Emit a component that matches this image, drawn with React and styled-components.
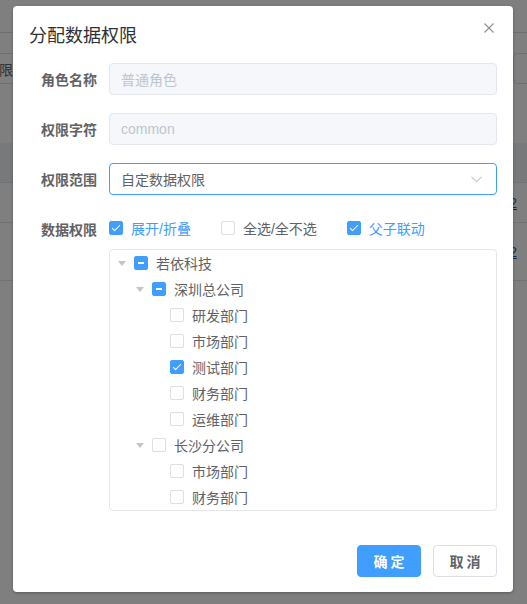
import React from "react";
import styled, { createGlobalStyle } from "styled-components";

const GlobalStyle = createGlobalStyle`
  html, body { margin: 0; padding: 0; }
  body {
    font-family: "Liberation Sans", "Noto Sans CJK SC", sans-serif;
    font-size: 14px;
    background: #fff;
  }
  * { box-sizing: border-box; }
`;

/* ---------- background page ---------- */
const Page = styled.div`
  position: relative;
  width: 527px;
  height: 604px;
  overflow: hidden;
  background: #fff;
  display: flex;
  flex-direction: column;
`;

const Navbar = styled.div`
  height: 33px;
  border-bottom: 1px solid #d8dce5;
  flex-shrink: 0;
`;

const Toolbar = styled.div`
  margin-top: 20px;
  height: 31px;
  display: flex;
  justify-content: space-between;
  flex-shrink: 0;
`;

const CutTab = styled.div`
  width: 14px;
  height: 31px;
  border-top: 1px solid #dcdfe6;
  border-bottom: 1px solid #dcdfe6;
  overflow: hidden;
  display: flex;
  justify-content: flex-end;
  align-items: center;
  white-space: nowrap;
  color: #606266;
  font-size: 14px;
  font-family: "Noto Sans CJK SC", sans-serif;
`;

const CutText = styled.span`
  flex-shrink: 0;
  padding-right: 1px;
`;

const RightBox = styled.div`
  width: 30px;
  height: 31px;
  border: 1px solid #dcdfe6;
  border-radius: 4px;
  margin-right: -16px;
`;

const Table = styled.div`
  margin-top: 59px;
  display: flex;
  flex-direction: column;
`;

const TableHead = styled.div`
  height: 40px;
  background: #f0f2f5;
  border-bottom: 1px solid #dfe6ec;
`;

const TableRow = styled.div`
  height: ${(p) => p.$h}px;
  border-bottom: 1px solid #dfe6ec;
  display: flex;
  align-items: center;
  justify-content: flex-end;
  padding-right: 10px;
`;

const CellLink = styled.span`
  color: #1f5fa8;
  text-decoration: underline;
  font-size: 14px;
`;

/* ---------- overlay & dialog ---------- */
const Overlay = styled.div`
  position: absolute;
  inset: 0;
  background: rgba(0, 0, 0, 0.5);
`;

const Dialog = styled.div`
  position: absolute;
  left: 13px;
  top: 6px;
  width: 500px;
  height: 586px;
  background: #fff;
  border-radius: 4px;
  box-shadow: 0 1px 3px rgba(0, 0, 0, 0.3);
  display: flex;
  flex-direction: column;
`;

const Header = styled.div`
  position: relative;
  padding: 16px 16px 0;
`;

const Title = styled.div`
  font-family: "Noto Sans CJK SC", sans-serif;
  font-size: 18px;
  line-height: 24px;
  color: #303133;
`;

const CloseBtn = styled.button`
  position: absolute;
  top: 17px;
  right: 19px;
  width: 10px;
  height: 10px;
  padding: 0;
  border: 0;
  background: none;
  display: flex;
`;

const Body = styled.div`
  padding: 17px 16px 0;
  display: flex;
  flex-direction: column;
`;

const FormItem = styled.div`
  display: flex;
  align-items: flex-start;
  margin-bottom: 18px;
`;

const Label = styled.div`
  width: 80px;
  flex-shrink: 0;
  padding-right: 12px;
  text-align: right;
  font-family: "Noto Sans CJK SC", sans-serif;
  font-weight: 700;
  font-size: 14px;
  line-height: 32px;
  color: #606266;
`;

const Content = styled.div`
  flex: 1;
  min-width: 0;
  display: flex;
  flex-direction: column;
`;

const Input = styled.div`
  height: 32px;
  border: 1px solid ${(p) => (p.$focus ? "#409eff" : "#e4e7ed")};
  background: ${(p) => (p.$disabled ? "#f5f7fa" : "#fff")};
  border-radius: 4px;
  padding: 0 14px 0 11px;
  display: flex;
  align-items: center;
  justify-content: space-between;
  color: ${(p) => (p.$disabled ? "#c0c4cc" : "#606266")};
  font-size: 14px;
`;

const CheckRow = styled.div`
  height: 30px;
  display: flex;
  align-items: center;
`;

const CheckItem = styled.label`
  display: flex;
  align-items: center;
  margin-right: 30px;
  cursor: pointer;
`;

const CheckText = styled.span`
  padding-left: 8px;
  font-size: 14px;
  color: ${(p) => (p.$on ? "#409eff" : "#606266")};
`;

const Box = styled.span`
  position: relative;
  display: inline-block;
  flex-shrink: 0;
  width: 14px;
  height: 14px;
  border-radius: 2px;
  border: 1px solid ${(p) => (p.$state !== "none" ? "#409eff" : "#dcdfe6")};
  background: ${(p) => (p.$state !== "none" ? "#409eff" : "#fff")};
  &::after {
    content: "";
    position: absolute;
    display: ${(p) => (p.$state === "none" ? "none" : "block")};
    ${(p) =>
      p.$state === "checked"
        ? `left: 4px; top: 1px; width: 3px; height: 7px;
           border: 1px solid #fff; border-left: 0; border-top: 0;
           transform: rotate(45deg);`
        : `left: 3px; right: 3px; top: 5px; height: 2px; background: #fff;`}
  }
`;

const TreeBox = styled.div`
  margin-top: 6px;
  border: 1px solid #e5e6e7;
  border-radius: 4px;
  background: #fff;
  display: flex;
  flex-direction: column;
`;

const TreeNode = styled.div`
  height: 26px;
  display: flex;
  align-items: center;
  padding-left: ${(p) => p.$level * 18}px;
`;

const Expander = styled.span`
  width: 24px;
  height: 26px;
  flex-shrink: 0;
  display: flex;
  align-items: center;
  justify-content: center;
  &::before {
    content: "";
    display: ${(p) => (p.$show ? "block" : "none")};
    width: 0;
    height: 0;
    border-left: 4px solid transparent;
    border-right: 4px solid transparent;
    border-top: 5px solid #c0c4cc;
  }
`;

const NodeLabel = styled.span`
  margin-left: 8px;
  font-size: 14px;
  color: #606266;
`;

const Footer = styled.div`
  margin-top: auto;
  padding: 0 16px 15px;
  display: flex;
  justify-content: flex-end;
  gap: 12px;
`;

const Button = styled.button`
  width: 64px;
  height: 32px;
  border-radius: 4px;
  font-family: "Noto Sans CJK SC", sans-serif;
  font-size: 14px;
  font-weight: 700;
  padding: 0;
  border: 1px solid ${(p) => (p.$primary ? "#409eff" : "#dcdfe6")};
  background: ${(p) => (p.$primary ? "#409eff" : "#fff")};
  color: ${(p) => (p.$primary ? "#fff" : "#606266")};
  white-space: pre;
`;

const tree = [
  { label: "若依科技", level: 0, parent: true, state: "ind" },
  { label: "深圳总公司", level: 1, parent: true, state: "ind" },
  { label: "研发部门", level: 2, state: "none" },
  { label: "市场部门", level: 2, state: "none" },
  { label: "测试部门", level: 2, state: "checked" },
  { label: "财务部门", level: 2, state: "none" },
  { label: "运维部门", level: 2, state: "none" },
  { label: "长沙分公司", level: 1, parent: true, state: "none" },
  { label: "市场部门", level: 2, state: "none" },
  { label: "财务部门", level: 2, state: "none" },
];

const Close = () => (
  <svg width="10" height="10" viewBox="0 0 10 10">
    <path d="M0.5 0.5 L9.5 9.5 M9.5 0.5 L0.5 9.5" stroke="#909399" strokeWidth="1.2" fill="none" />
  </svg>
);

const Chevron = () => (
  <svg width="11" height="7" viewBox="0 0 11 7">
    <path d="M0.5 0.8 L5.5 5.8 L10.5 0.8" stroke="#c0c4cc" strokeWidth="1.1" fill="none" />
  </svg>
);

export default function App() {
  return (
    <>
      <GlobalStyle />
      <Page>
        <Navbar />
        <Toolbar>
          <CutTab>
            <CutText>数据权限</CutText>
          </CutTab>
          <RightBox />
        </Toolbar>
        <Table>
          <TableHead />
          <TableRow $h={40}>
            <CellLink>2</CellLink>
          </TableRow>
          <TableRow $h={58}>
            <CellLink>2</CellLink>
          </TableRow>
        </Table>
        <Overlay />
        <Dialog>
          <Header>
            <Title>分配数据权限</Title>
            <CloseBtn aria-label="close">
              <Close />
            </CloseBtn>
          </Header>
          <Body>
            <FormItem>
              <Label>角色名称</Label>
              <Content>
                <Input $disabled>普通角色</Input>
              </Content>
            </FormItem>
            <FormItem>
              <Label>权限字符</Label>
              <Content>
                <Input $disabled>common</Input>
              </Content>
            </FormItem>
            <FormItem>
              <Label>权限范围</Label>
              <Content>
                <Input $focus>
                  <span>自定数据权限</span>
                  <Chevron />
                </Input>
              </Content>
            </FormItem>
            <FormItem>
              <Label>数据权限</Label>
              <Content>
                <CheckRow>
                  <CheckItem>
                    <Box $state="checked" />
                    <CheckText $on>展开/折叠</CheckText>
                  </CheckItem>
                  <CheckItem>
                    <Box $state="none" />
                    <CheckText>全选/全不选</CheckText>
                  </CheckItem>
                  <CheckItem>
                    <Box $state="checked" />
                    <CheckText $on>父子联动</CheckText>
                  </CheckItem>
                </CheckRow>
                <TreeBox>
                  {tree.map((n, i) => (
                    <TreeNode key={i} $level={n.level}>
                      <Expander $show={n.parent} />
                      <Box $state={n.state} />
                      <NodeLabel>{n.label}</NodeLabel>
                    </TreeNode>
                  ))}
                </TreeBox>
              </Content>
            </FormItem>
          </Body>
          <Footer>
            <Button $primary>确 定</Button>
            <Button>取 消</Button>
          </Footer>
        </Dialog>
      </Page>
    </>
  );
}
